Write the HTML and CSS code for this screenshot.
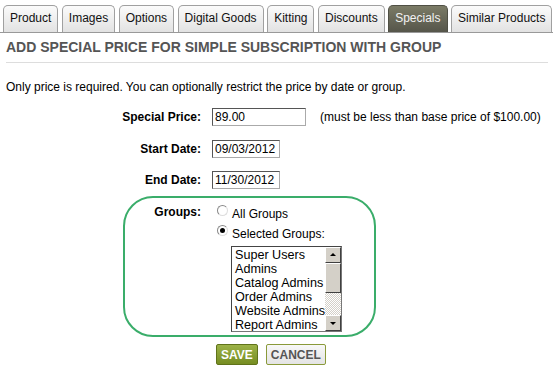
FILE: index.html
```html
<!DOCTYPE html>
<html lang="en">
<head>
    <meta charset="UTF-8">
    <title>Specials</title>
    <link rel="stylesheet" href="styles.css">
</head>
<body>
    <ul class="tabs">
        <li class="tab">Product</li>
        <li class="tab">Images</li>
        <li class="tab">Options</li>
        <li class="tab">Digital Goods</li>
        <li class="tab">Kitting</li>
        <li class="tab">Discounts</li>
        <li class="tab active">Specials</li>
        <li class="tab">Similar Products</li>
    </ul>

    <h2 class="title">Add special price for simple subscription with group</h2>

    <p class="intro">Only price is required. You can optionally restrict the price by date or group.</p>

    <form class="special-form">
        <div class="row">
            <label class="lbl" for="price">Special Price:</label>
            <div class="field">
                <input class="txt price" id="price" type="text" value="89.00">
                <span class="hint">(must be less than base price of $100.00)</span>
            </div>
        </div>
        <div class="row">
            <label class="lbl" for="start">Start Date:</label>
            <div class="field"><input class="txt date" id="start" type="text" value="09/03/2012"></div>
        </div>
        <div class="row">
            <label class="lbl" for="end">End Date:</label>
            <div class="field"><input class="txt date" id="end" type="text" value="11/30/2012"></div>
        </div>

        <div class="groups-box">
            <div class="row groups-row">
                <span class="lbl">Groups:</span>
                <div class="field group-options">
                    <label class="radio"><span class="dot"></span>All Groups</label>
                    <label class="radio"><span class="dot on"></span>Selected Groups:</label>
                    <div class="listbox">
                        <ul class="items">
                            <li>Super Users</li>
                            <li>Admins</li>
                            <li>Catalog Admins</li>
                            <li>Order Admins</li>
                            <li>Website Admins</li>
                            <li>Report Admins</li>
                        </ul>
                        <div class="scrollbar">
                            <div class="arrow up"></div>
                            <div class="thumb"></div>
                            <div class="track"></div>
                            <div class="arrow down"></div>
                        </div>
                    </div>
                </div>
            </div>
        </div>

        <div class="buttons">
            <button type="button" class="btn save">SAVE</button>
            <button type="button" class="btn cancel">CANCEL</button>
        </div>
    </form>
</body>
</html>
```

FILE: styles.css
```css
body {
    margin: 0;
    font-family: "Liberation Sans", Arial, sans-serif;
    font-size: 12px;
    color: #000;
    background: #fff;
}

.tabs {
    list-style: none;
    margin: 0;
    padding: 5px 0 0 3px;
    display: flex;
    gap: 3.5px;
    border-bottom: 1px solid #999;
    height: 27px;
}

.tab {
    height: 26px;
    line-height: 25px;
    padding: 0 6px;
    border: 1px solid #a0a0a0;
    border-bottom: none;
    border-radius: 5px 5px 0 0;
    background: linear-gradient(#fbfbfb, #e2e2e2);
    color: #111;
    font-size: 12px;
}

.tab.active {
    background: linear-gradient(#7b7b66, #55554a);
    border-color: #4f4f44;
    color: #f2f2f2;
}

.title {
    margin: 6px 5px 0 6px;
    font-size: 14px;
    font-weight: bold;
    text-transform: uppercase;
    color: #555;
    height: 23px;
    line-height: 16px;
    border-bottom: 1px solid #ddd;
}

.intro {
    margin: 17px 0 0 6px;
}

.special-form {
    margin-top: 14px;
}

.row {
    display: grid;
    grid-template-columns: 201px 1fr;
    column-gap: 11px;
    align-items: center;
    margin-bottom: 13.5px;
}

.lbl {
    text-align: right;
    font-weight: bold;
}

.field {
    display: flex;
    align-items: center;
}

.txt {
    height: 18px;
    box-sizing: border-box;
    border: 1px solid #aaa;
    border-top-color: #555;
    border-left-color: #555;
    padding: 0 2px;
    font-family: "Liberation Sans", Arial, sans-serif;
    font-size: 12px;
    margin: 0;
}

.price { width: 94px; }
.date { width: 68px; }

.hint {
    margin-left: 14px;
}

.groups-box {
    margin: -6.5px 0 0 123px;
    width: 253px;
    height: 141px;
    border: 2px solid #3aad6a;
    border-radius: 30px;
    box-sizing: border-box;
    padding-top: 7px;
}

.groups-row {
    grid-template-columns: 76px 1fr;
    column-gap: 17px;
    align-items: start;
    margin: 0;
}

.group-options {
    flex-direction: column;
    align-items: flex-start;
}

.radio {
    display: flex;
    align-items: center;
    height: 17px;
    margin-bottom: 3px;
    margin-left: -1px;
}

.dot {
    width: 11px;
    height: 11px;
    border-radius: 50%;
    border: 1px solid #888;
    border-right-color: #ddd;
    border-bottom-color: #ddd;
    box-sizing: border-box;
    margin-right: 4px;
    margin-top: -6px;
    background: #fff;
    position: relative;
}

.dot.on::after {
    content: "";
    position: absolute;
    left: 2px;
    top: 2px;
    width: 5px;
    height: 5px;
    border-radius: 50%;
    background: #000;
}

.listbox {
    margin: 1px 0 0 13px;
    width: 111px;
    height: 86px;
    border: 1px solid #777;
    border-top-color: #444;
    border-left-color: #444;
    box-sizing: border-box;
    display: flex;
}

.items {
    list-style: none;
    margin: 0;
    padding: 1px 0 0 3px;
    flex: 1;
    line-height: 14px;
    font-size: 12.6px;
    overflow: hidden;
    white-space: nowrap;
}

.scrollbar {
    width: 16px;
    display: flex;
    flex-direction: column;
    background: #fff;
}

.arrow {
    height: 16px;
    box-sizing: border-box;
    background: #d4d0c8;
    border: 1px solid #fff;
    border-right-color: #404040;
    border-bottom-color: #404040;
    position: relative;
}

.arrow::after {
    content: "";
    position: absolute;
    left: 4px;
    border-left: 3px solid transparent;
    border-right: 3px solid transparent;
}

.arrow.up::after {
    top: 5px;
    border-bottom: 3px solid #000;
}

.arrow.down::after {
    top: 6px;
    border-top: 3px solid #000;
}

.thumb {
    height: 30px;
    box-sizing: border-box;
    background: #d4d0c8;
    border: 1px solid #fff;
    border-right-color: #404040;
    border-bottom-color: #404040;
}

.track {
    flex: 1;
    background: repeating-conic-gradient(#d4d0c8 0 25%, #fff 0 50%) 0 0 / 2px 2px;
}

.buttons {
    display: flex;
    gap: 8px;
    margin: 7px 0 0 216px;
}

.btn {
    height: 21px;
    padding: 0 4px;
    font-family: "Liberation Sans", Arial, sans-serif;
    font-size: 12px;
    font-weight: bold;
    border-radius: 2px;
    cursor: pointer;
}

.save {
    background: linear-gradient(#9cb247, #768d22);
    border: 1px solid #60731a;
    color: #fff;
}

.cancel {
    background: linear-gradient(#f8f8f8, #e4e4e4);
    border: 1px solid #8a9a3a;
    color: #555;
}
```
